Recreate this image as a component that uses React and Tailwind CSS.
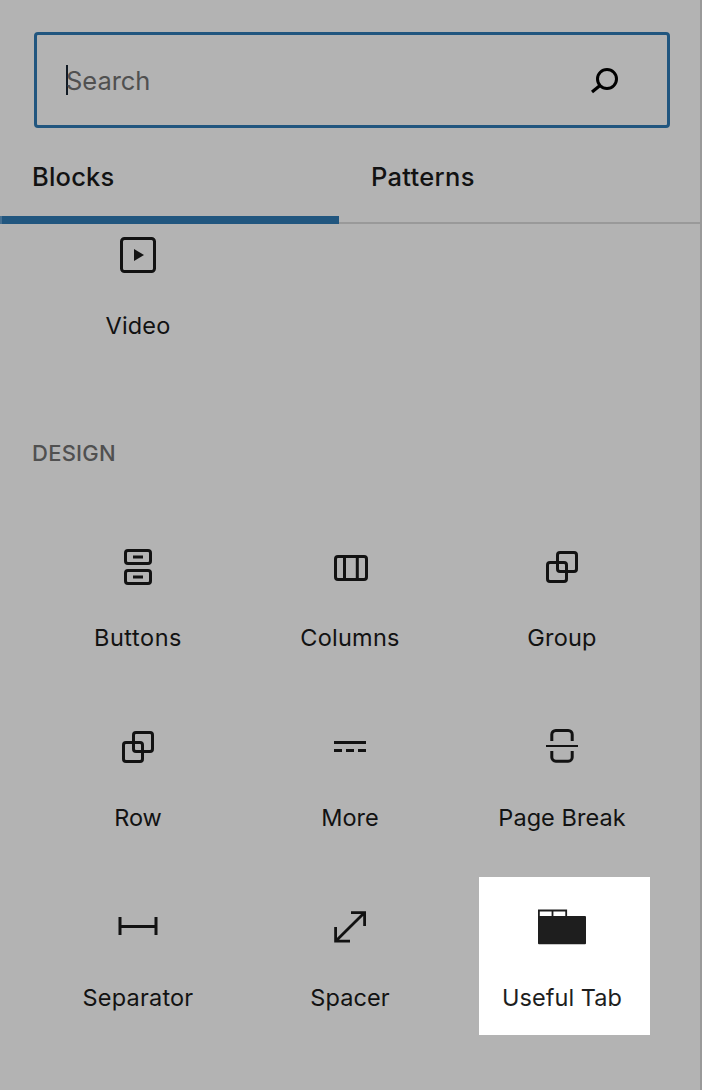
const Icon = ({ children }) => (
  <svg viewBox="0 0 48 48" className="size-12 shrink-0" fill="none" stroke="currentColor" strokeWidth="3">
    {children}
  </svg>
);

const VideoIcon = () => (
  <Icon>
    <rect x="7.5" y="7.5" width="33" height="33" rx="3" />
    <path d="M20 18l10 6-10 6z" fill="currentColor" stroke="none" />
  </Icon>
);

const ButtonsIcon = () => (
  <Icon>
    <rect x="11.5" y="7.5" width="25" height="13" rx="2.5" />
    <rect x="11.5" y="27.5" width="25" height="13" rx="2.5" />
    <path d="M19 14h10M19 34h10" />
  </Icon>
);

const ColumnsIcon = () => (
  <Icon>
    <rect x="9.5" y="13.5" width="31" height="23" rx="2.5" />
    <path d="M18.5 13v24M31.3 13v24" />
  </Icon>
);

const GroupIcon = () => (
  <Icon>
    <rect x="19.5" y="9.5" width="19" height="19" rx="2.5" />
    <rect x="9.5" y="19.5" width="19" height="19" rx="2.5" />
  </Icon>
);

const MoreIcon = () => (
  <Icon>
    <path d="M8 19.5h32M8 27.5h8M20 27.5h8M32 27.5h8" />
  </Icon>
);

const PageBreakIcon = () => (
  <Icon>
    <path d="M13.8 18v-6.5a4 4 0 0 1 4-4h12.4a4 4 0 0 1 4 4V18M13.8 28v6.2a4 4 0 0 0 4 4h12.4a4 4 0 0 0 4-4V28" />
    <path d="M8 23h32" strokeWidth="2" />
  </Icon>
);

const SeparatorIcon = () => (
  <Icon>
    <path d="M6 14v18M42 14v18M6 23.5h36" />
  </Icon>
);

const SpacerIcon = () => (
  <Icon>
    <path d="M25 9.6h13.6V23M9.6 24v14.2H24M38.6 9.6l-29 28.6" strokeWidth="2.8" />
  </Icon>
);

const TabIcon = () => (
  <Icon>
    <rect x="0" y="13" width="48" height="28.3" rx="1" fill="currentColor" stroke="none" />
    <path d="M.9 14V7.5h27.3V14M14.5 7.5V14" strokeWidth="1.8" />
  </Icon>
);

const designBlocks = [
  { name: "Buttons", icon: ButtonsIcon, tracking: "tracking-[0.55px]" },
  { name: "Columns", icon: ColumnsIcon, tracking: "tracking-[0.25px]" },
  { name: "Group", icon: GroupIcon, tracking: "tracking-[0.2px]" },
  { name: "Row", icon: GroupIcon },
  { name: "More", icon: MoreIcon },
  { name: "Page Break", icon: PageBreakIcon, tracking: "tracking-[0.05px]" },
  { name: "Separator", icon: SeparatorIcon, tracking: "tracking-[0.2px]" },
  { name: "Spacer", icon: SpacerIcon, tracking: "tracking-[0.1px]" },
  { name: "Useful Tab", icon: TabIcon, tracking: "tracking-[0.05px]", highlighted: true },
];

function Block({ name, icon: Glyph, tracking = "tracking-normal", highlighted }) {
  const color = highlighted ? "text-[#1e1e1e]" : "text-[#121212]";
  return (
    <button className={`relative flex h-[180px] flex-col items-center pt-4 ${color}`}>
      {highlighted && <span className="absolute top-[-10px] left-[23px] h-[158px] w-[171px] bg-white" />}
      <span className="relative">
        <Glyph />
      </span>
      <span className={`relative mt-[31px] text-[23.5px] leading-8 whitespace-nowrap ${tracking}`}>{name}</span>
    </button>
  );
}

export default function App() {
  return (
    <div className="flex h-[1090px] w-[702px] flex-col overflow-hidden border-r-2 border-[#999] bg-[#b3b3b3] font-['Inter',sans-serif] text-[#121212]">
      <div className="mt-8 mr-[30px] ml-[34px] flex h-24 shrink-0 items-center justify-between rounded-[4px] border-3 border-[#21567f] pr-[47px] pl-[29px]">
        <div className="flex items-center">
          <span className="h-[30px] w-[2px] bg-[#121b24]" />
          <span className="-ml-[2px] pt-[2px] text-[25.5px] leading-8 tracking-[-0.05px] text-[#505050]">Search</span>
        </div>
        <svg viewBox="0 0 30 30" className="size-[30px] text-black" fill="none" stroke="currentColor" strokeWidth="3">
          <circle cx="17" cy="14" r="9.5" />
          <path d="M10 20.5L2 27" strokeWidth="3.2" />
        </svg>
      </div>

      <div className="flex h-24 shrink-0 text-[25.5px] leading-8 font-medium">
        <button className="flex w-[339px] flex-col items-start justify-between pt-[33px]">
          <span className="pl-8 tracking-[0.2px]">Blocks</span>
          <span className="h-2 w-full border-l-2 border-[#456f91] bg-[#21567f]" />
        </button>
        <button className="flex flex-1 items-start border-b-2 border-[#999] pt-[33px] pl-8 tracking-[0.3px]">Patterns</button>
      </div>

      <div className="-mt-[9px] grid h-[180px] shrink-0 grid-cols-[repeat(3,212px)] pl-8">
        <Block name="Video" icon={VideoIcon} tracking="tracking-[0.15px]" />
      </div>

      <h2 className="mt-[42px] pl-8 text-[22px] leading-8 font-medium tracking-[0.25px] text-[#505050]">DESIGN</h2>

      <div className="mt-[58px] grid grid-cols-[repeat(3,212px)] pl-8">
        {designBlocks.map((block) => (
          <Block key={block.name} {...block} />
        ))}
      </div>
    </div>
  );
}
